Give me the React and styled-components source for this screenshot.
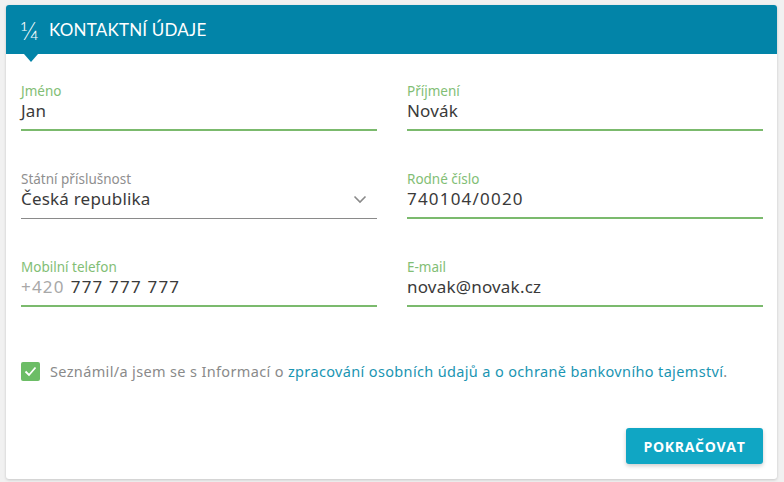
import React from 'react';
import styled, { createGlobalStyle } from 'styled-components';

const GlobalStyle = createGlobalStyle`
  body {
    margin: 0;
    background: #f1f1f1;
    font-family: "Noto Sans", "Open Sans", sans-serif;
  }
`;

const Page = styled.div`
  padding: 5px 7px 5px 6px;
`;

const Card = styled.div`
  background: #fff;
  border-radius: 3px;
  box-shadow: 0 1px 3px rgba(0, 0, 0, 0.18);
  overflow: hidden;
`;

const Header = styled.div`
  position: relative;
  height: 49px;
  background: #0284a8;
  color: #fff;
  display: flex;
  align-items: center;
  padding-left: 14px;
  gap: 10px;
  font-family: Lato, "Open Sans", sans-serif;
  font-size: 17px;
  letter-spacing: 0.2px;

  &::after {
    content: '';
    position: absolute;
    left: 18px;
    bottom: -8px;
    border-left: 7px solid transparent;
    border-right: 7px solid transparent;
    border-top: 8px solid #0284a8;
  }
`;

const Step = styled.span`
  font-size: 26px;
  font-weight: 300;
  line-height: 1;
`;

const Body = styled.div`
  padding: 29px 14px 15px 15px;
`;

const Grid = styled.div`
  display: grid;
  grid-template-columns: 356px 356px;
  column-gap: 30px;
  row-gap: 40px;
`;

const Field = styled.div`
  border-bottom: ${p => (p.$valid ? '2px solid #7bba6d' : '1px solid #8a8a8a')};
  padding-bottom: ${p => (p.$valid ? '6px' : '7px')};
  display: flex;
  flex-direction: column;
`;

const Label = styled.label`
  font-size: 13.5px;
  line-height: 16px;
  color: ${p => (p.$valid ? '#82be75' : '#8f8f8f')};
`;

const ValueRow = styled.div`
  display: flex;
  align-items: center;
  justify-content: space-between;
  font-size: 17px;
  line-height: 24px;
  color: #3a3a3a;
  letter-spacing: ${p => (p.$numeric ? '1.2px' : '0.2px')};
`;

const Prefix = styled.span`
  color: #a8a8a8;
  margin-right: 6px;
`;

const Consent = styled.div`
  display: flex;
  align-items: center;
  gap: 10px;
  margin-top: 54px;
  font-size: 14.5px;
  letter-spacing: 0.35px;
  color: #8a8a8a;
`;

const Check = styled.span`
  width: 19px;
  height: 19px;
  border-radius: 2px;
  background: #6cbd66;
  display: flex;
  align-items: center;
  justify-content: center;
  flex-shrink: 0;
`;

const Link = styled.a`
  color: #1a95b2;
  text-decoration: none;
`;

const Actions = styled.div`
  display: flex;
  justify-content: flex-end;
  margin-top: 47px;
`;

const Button = styled.button`
  width: 137px;
  height: 36px;
  border: none;
  border-radius: 3px;
  background: #10a6c4;
  color: #fff;
  font-family: "Open Sans", sans-serif;
  font-weight: 700;
  font-size: 14px;
  letter-spacing: 0.7px;
  box-shadow: 0 2px 4px rgba(0, 0, 0, 0.2);
`;

const fields = [
  { label: 'Jméno', value: 'Jan', valid: true },
  { label: 'Příjmení', value: 'Novák', valid: true },
  { label: 'Státní příslušnost', value: 'Česká republika', select: true },
  { label: 'Rodné číslo', value: '740104/0020', valid: true, numeric: true },
  { label: 'Mobilní telefon', value: '777 777 777', prefix: '+420', valid: true, numeric: true },
  { label: 'E-mail', value: 'novak@novak.cz', valid: true },
];

const Chevron = () => (
  <svg width="14" height="9" viewBox="0 0 14 9" style={{ marginRight: 10 }}>
    <path d="M1.5 1.5 L7 7 L12.5 1.5" fill="none" stroke="#8a8a8a" strokeWidth="1.6" />
  </svg>
);

export default function App() {
  return (
    <Page>
      <GlobalStyle />
      <Card>
        <Header>
          <Step>¼</Step>
          <span>KONTAKTNÍ ÚDAJE</span>
        </Header>
        <Body>
          <Grid>
            {fields.map(f => (
              <Field key={f.label} $valid={f.valid}>
                <Label $valid={f.valid}>{f.label}</Label>
                <ValueRow $numeric={f.numeric}>
                  <span>
                    {f.prefix && <Prefix>{f.prefix}</Prefix>}
                    {f.value}
                  </span>
                  {f.select && <Chevron />}
                </ValueRow>
              </Field>
            ))}
          </Grid>
          <Consent>
            <Check>
              <svg width="13" height="11" viewBox="0 0 13 11">
                <path d="M1.5 5.5 L5 9 L11.5 1.5" fill="none" stroke="#fff" strokeWidth="1.8" />
              </svg>
            </Check>
            <span>
              Seznámil/a jsem se s Informací o{' '}
              <Link href="#">zpracování osobních údajů a o ochraně bankovního tajemství</Link>.
            </span>
          </Consent>
          <Actions>
            <Button>POKRAČOVAT</Button>
          </Actions>
        </Body>
      </Card>
    </Page>
  );
}
